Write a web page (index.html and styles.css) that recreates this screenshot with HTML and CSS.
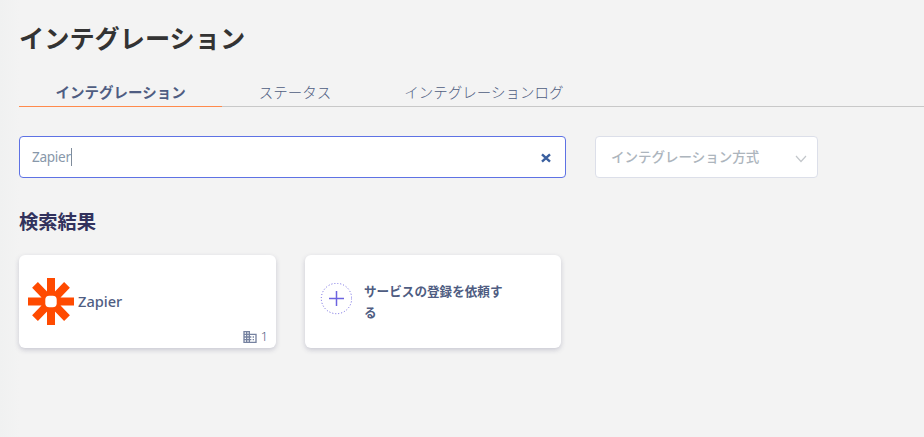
FILE: index.html
```
<!DOCTYPE html>
<html lang="ja">
<head>
    <meta charset="UTF-8">
    <title>インテグレーション</title>
    <link rel="stylesheet" href="styles.css">
</head>
<body>
    <div class="container">
        <h1>インテグレーション</h1>

        <nav class="tabs">
            <a class="tab active">インテグレーション</a>
            <a class="tab">ステータス</a>
            <a class="tab">インテグレーションログ</a>
        </nav>

        <div class="filters">
            <div class="search-box">
                <span class="search-text">Zapier</span>
                <span class="caret"></span>
                <svg class="clear-icon" width="10" height="10" viewBox="0 0 10 10">
                    <path d="M1 1.3L9 8.7M9 1.3L1 8.7"/>
                </svg>
            </div>
            <div class="select-box">
                <span>インテグレーション方式</span>
                <svg class="chevron" width="12" height="8" viewBox="0 0 12 8">
                    <path d="M1 1L6 6.5L11 1"/>
                </svg>
            </div>
        </div>

        <h2>検索結果</h2>

        <div class="cards">
            <div class="card">
                <svg class="logo" width="46" height="48" viewBox="0 0 46 48">
                    <path d="M23 0V47M0 23.5H46M7 6.9L39 40.1M39 6.9L7 40.1"/>
                    <rect x="17.3" y="17.8" width="11.4" height="11.4" rx="4"/>
                </svg>
                <span class="service-name">Zapier</span>
                <div class="count">
                    <svg class="building" width="16" height="16" viewBox="0 0 24 24">
                        <path d="M12 7V3H2v18h20V7H12zM6 19H4v-2h2v2zm0-4H4v-2h2v2zm0-4H4V9h2v2zm0-4H4V5h2v2zm4 12H8v-2h2v2zm0-4H8v-2h2v2zm0-4H8V9h2v2zm0-4H8V5h2v2zm10 12h-8v-2h2v-2h-2v-2h2v-2h-2V9h8v10zm-2-8h-2v2h2v-2zm0 4h-2v2h2v-2z"/>
                    </svg>
                    <span>1</span>
                </div>
            </div>
            <div class="card request">
                <svg class="add-icon" width="32" height="32" viewBox="0 0 32 32">
                    <circle cx="16.5" cy="15.5" r="15.2"/>
                    <path d="M9 15.5H24M16.5 8V23"/>
                </svg>
                <span class="request-text">サービスの登録を依頼する</span>
            </div>
        </div>
    </div>
</body>
</html>
```

FILE: styles.css
```
* {
    box-sizing: border-box;
}
body {
    margin: 0;
    height: 437px;
    overflow: hidden;
    background: linear-gradient(to right, #f0f1f1, #f3f3f3 20px);
    font-family: "Noto Sans", "Noto Sans CJK JP", sans-serif;
    color: #4f5d82;
}
.container {
    padding: 20px 0 0 19px;
}
h1 {
    margin: 0;
    font-size: 25.2px;
    line-height: 36px;
    font-weight: 700;
    color: #333;
}
.tabs {
    display: flex;
    height: 31px;
    margin-top: 20px;
    border-bottom: 1px solid #c8c8c8;
}
.tab {
    height: 31px;
    padding: 0 36.5px;
    font-size: 14.5px;
    line-height: 33px;
    font-weight: 300;
    white-space: nowrap;
}
.tab.active {
    font-weight: 700;
    border-bottom: 1px solid #ff8a4c;
}
.filters {
    display: flex;
    gap: 29px;
    margin-top: 29px;
}
.search-box,
.select-box {
    display: flex;
    align-items: center;
    height: 42px;
    background: #fff;
    border: 1px solid #5e72e4;
    border-radius: 4px;
}
.search-box {
    width: 547px;
    padding: 0 14px 0 12px;
}
.search-text {
    margin-bottom: 2px;
    font-size: 13.6px;
    font-weight: 400;
    letter-spacing: -0.3px;
    color: #8898aa;
}
.caret {
    width: 1px;
    height: 18px;
    background: #7f8c9b;
}
.clear-icon {
    margin: 2px 0 0 auto;
    fill: none;
    stroke: #3a5f9f;
    stroke-width: 2.4;
}
.select-box {
    width: 223px;
    padding: 0 10px 0 15px;
    border-color: #dcdfe9;
    font-size: 13.5px;
    font-weight: 500;
    color: #adb5bd;
}
.select-box span {
    margin-bottom: 2px;
}
.chevron {
    margin: 3px 0 0 auto;
    fill: none;
    stroke: #c3c7cb;
    stroke-width: 1.2;
}
h2 {
    margin: 28px 0 0;
    font-size: 19.3px;
    line-height: 32px;
    font-weight: 700;
    color: #32325d;
}
.cards {
    display: flex;
    gap: 29px;
    margin-top: 17px;
}
.card {
    position: relative;
    display: flex;
    align-items: center;
    width: 257px;
    height: 93px;
    padding-left: 9px;
    background: #fff;
    border-radius: 6px;
    box-shadow: 0 2px 5px rgba(50, 50, 93, 0.22);
}
.logo path {
    fill: none;
    stroke: #ff4a00;
    stroke-width: 8;
}
.logo rect {
    fill: #fff;
}
.service-name {
    margin: 0 0 2px 4px;
    font-size: 14.6px;
    font-weight: 500;
}
.count {
    position: absolute;
    right: 8px;
    bottom: 2px;
    display: flex;
    align-items: center;
    gap: 3px;
    font-size: 12.6px;
    line-height: 18px;
    font-weight: 300;
}
.building {
    fill: #7682a0;
}
.request {
    width: 256px;
    padding-left: 15px;
}
.add-icon {
    flex: none;
    margin-top: -5px;
    fill: none;
    stroke: #6c63e0;
}
.add-icon circle {
    stroke-dasharray: 1 2;
}
.add-icon path {
    stroke-width: 1.5;
}
.request-text {
    width: 145px;
    margin-left: 12px;
    font-size: 12.6px;
    line-height: 21px;
    font-weight: 700;
}
```
